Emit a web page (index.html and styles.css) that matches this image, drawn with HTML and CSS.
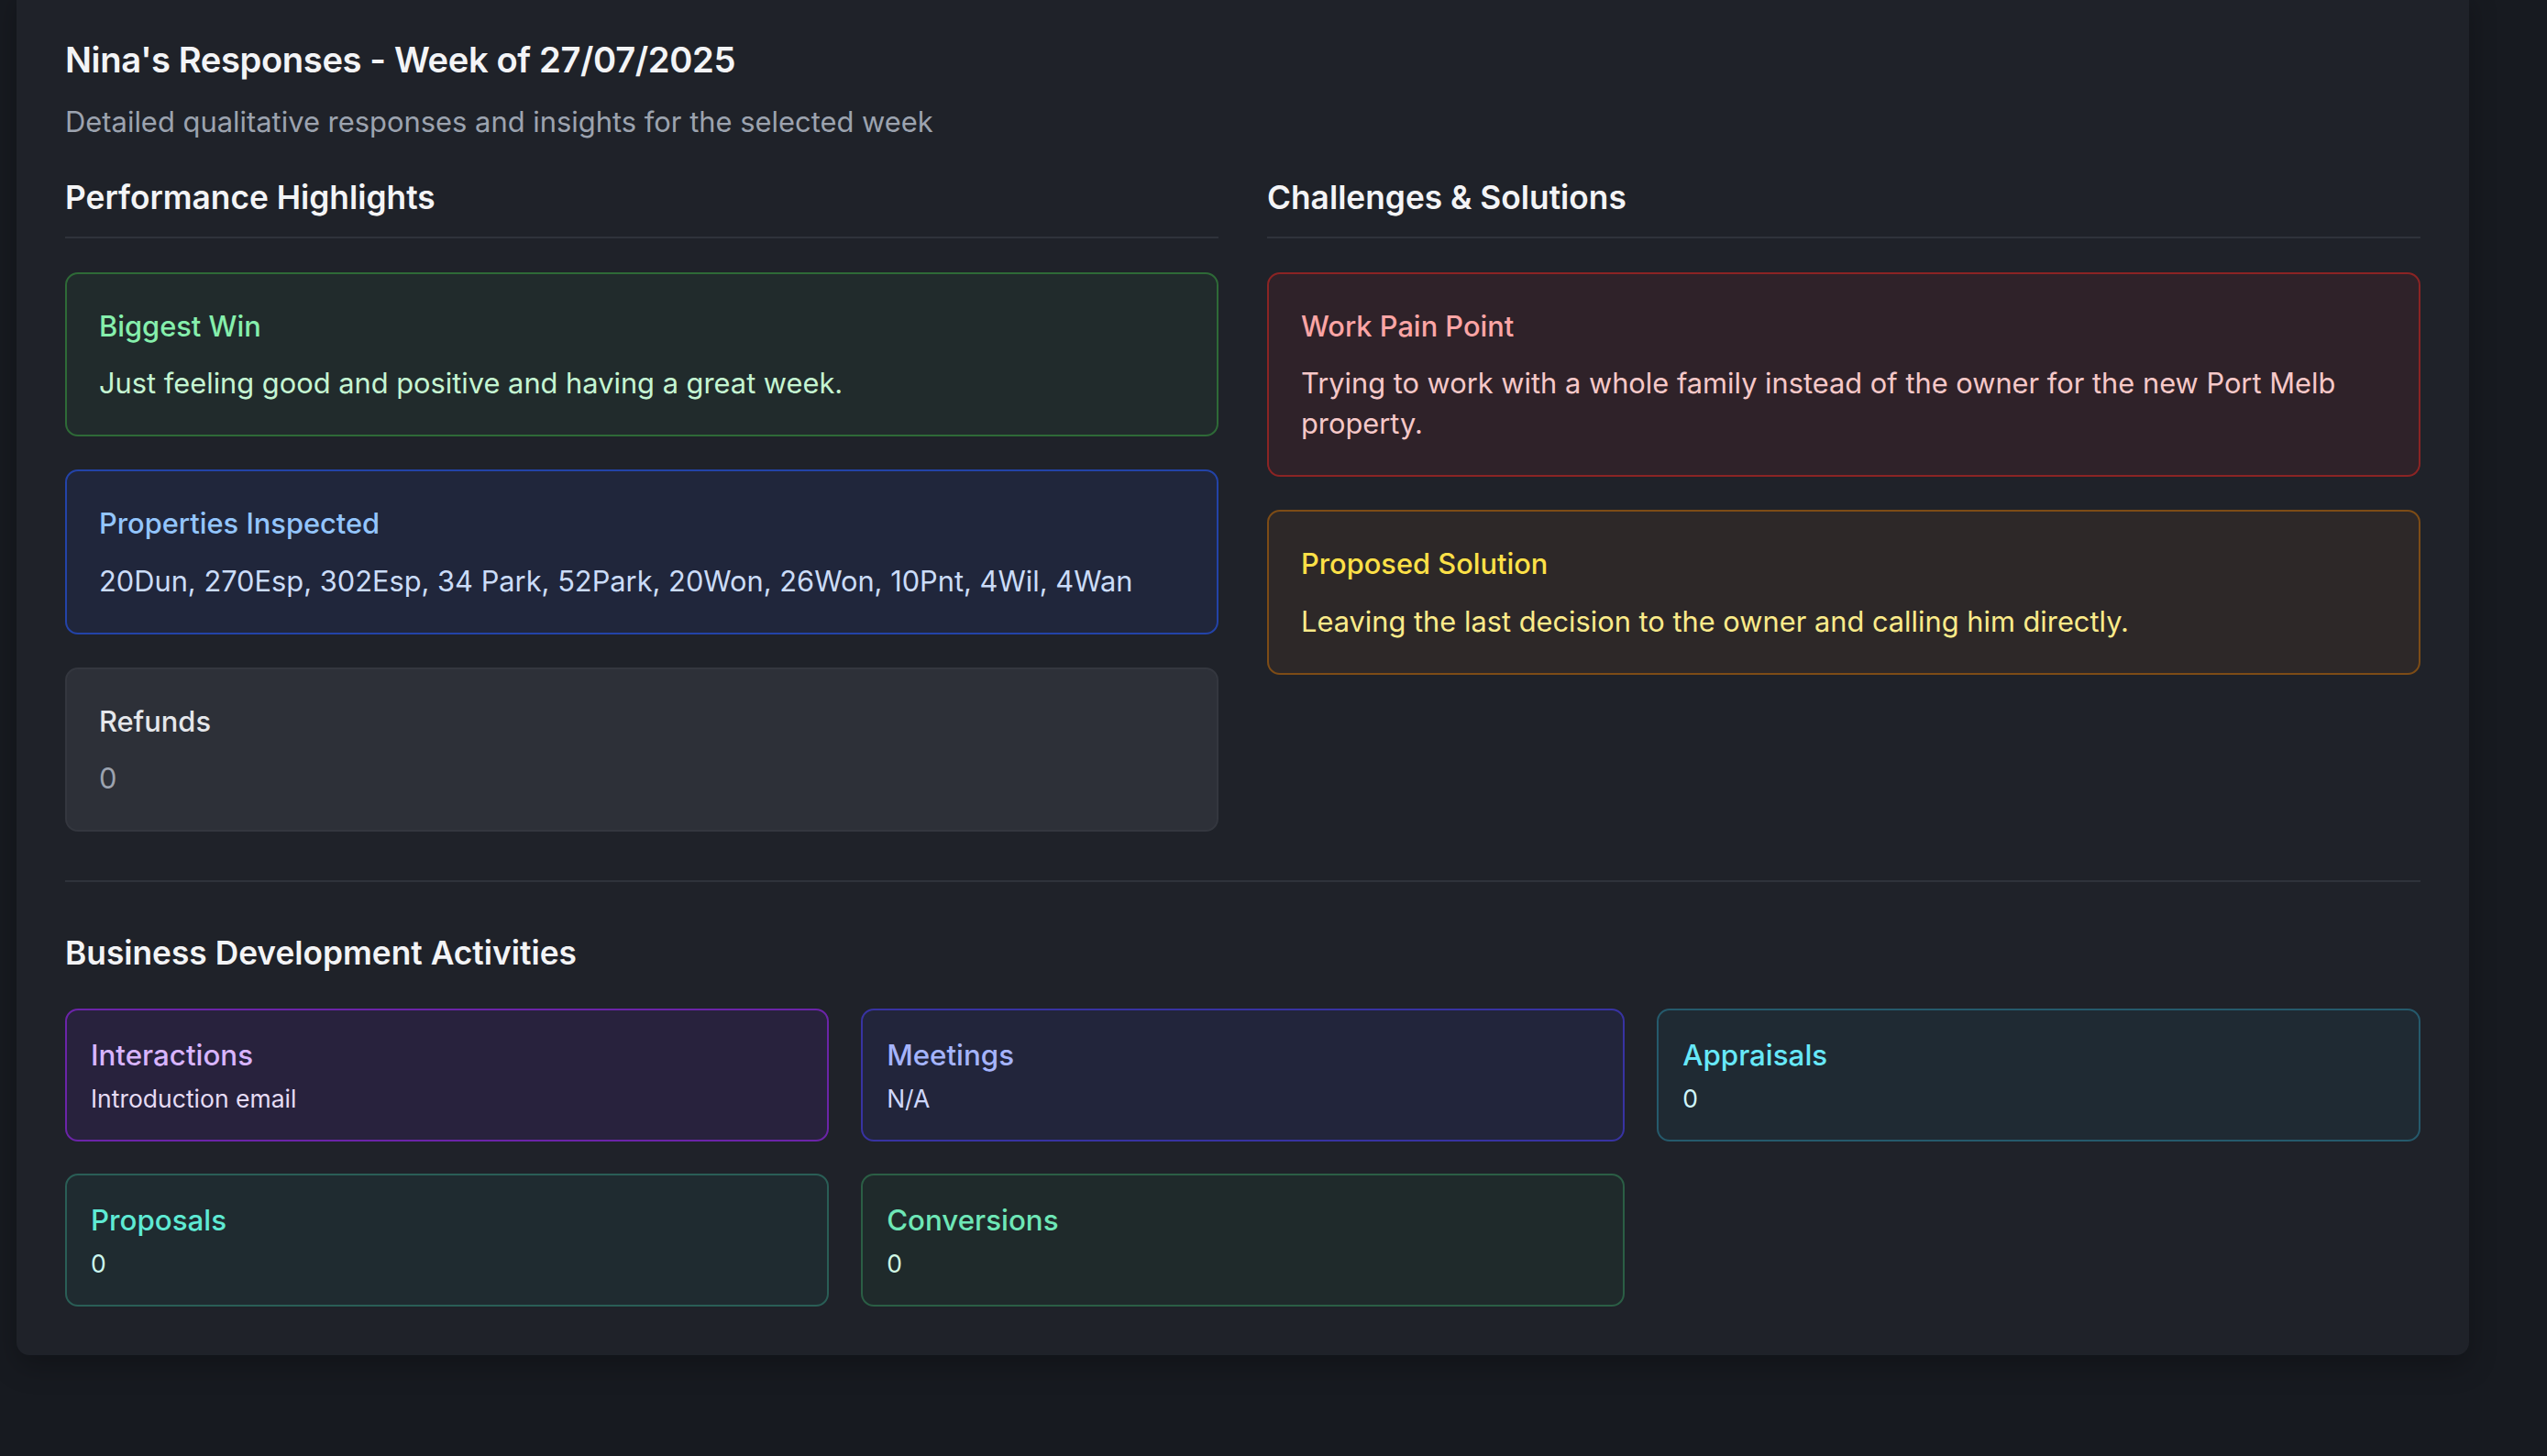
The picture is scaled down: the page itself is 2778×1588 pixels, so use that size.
FILE: index.html
```html
<!DOCTYPE html>
<html lang="en">
<head>
<meta charset="utf-8">
<title>Nina's Responses</title>
<link rel="stylesheet" href="styles.css">
</head>
<body>
<div class="page">
  <section class="panel">
    <header class="panel-head">
      <h1 class="title">Nina's Responses - Week of 27/07/2025</h1>
      <p class="subtitle">Detailed qualitative responses and insights for the selected week</p>
    </header>

    <div class="columns">
      <div class="column">
        <h2 class="section-title with-rule">Performance Highlights</h2>
        <div class="stack">
          <div class="card card-green">
            <div class="card-title">Biggest Win</div>
            <div class="card-body">Just feeling good and positive and having a great week.</div>
          </div>
          <div class="card card-blue">
            <div class="card-title">Properties Inspected</div>
            <div class="card-body">20Dun, 270Esp, 302Esp, 34 Park, 52Park, 20Won, 26Won, 10Pnt, 4Wil, 4Wan</div>
          </div>
          <div class="card card-gray">
            <div class="card-title">Refunds</div>
            <div class="card-body">0</div>
          </div>
        </div>
      </div>
      <div class="column">
        <h2 class="section-title with-rule">Challenges &amp; Solutions</h2>
        <div class="stack">
          <div class="card card-red">
            <div class="card-title">Work Pain Point</div>
            <div class="card-body">Trying to work with a whole family instead of the owner for the new Port Melb property.</div>
          </div>
          <div class="card card-yellow">
            <div class="card-title">Proposed Solution</div>
            <div class="card-body">Leaving the last decision to the owner and calling him directly.</div>
          </div>
        </div>
      </div>
    </div>

    <div class="bizdev">
      <h2 class="section-title">Business Development Activities</h2>
      <div class="grid">
        <div class="tile tile-purple">
          <div class="tile-title">Interactions</div>
          <div class="tile-value">Introduction email</div>
        </div>
        <div class="tile tile-indigo">
          <div class="tile-title">Meetings</div>
          <div class="tile-value">N/A</div>
        </div>
        <div class="tile tile-cyan">
          <div class="tile-title">Appraisals</div>
          <div class="tile-value">0</div>
        </div>
        <div class="tile tile-teal">
          <div class="tile-title">Proposals</div>
          <div class="tile-value">0</div>
        </div>
        <div class="tile tile-emerald">
          <div class="tile-title">Conversions</div>
          <div class="tile-value">0</div>
        </div>
      </div>
    </div>
  </section>
</div>
</body>
</html>
```
FILE: styles.css
```css
* { box-sizing: border-box; }

html, body {
  margin: 0;
  padding: 0;
  background: #171a20;
}

body {
  font-family: Inter, "Noto Sans", "Liberation Sans", sans-serif;
  color: #e5e7eb;
  min-height: 1588px;
}

.page {
  padding: 0 85px 0 18px;
}

.panel {
  margin-top: -14px;
  background: #1f2229;
  border-radius: 14px;
  padding: 53px 53px 53px 53px;
  box-shadow: 0 12px 30px rgba(0, 0, 0, 0.25);
}

.panel-head {
  margin-bottom: 36px;
}

.title {
  margin: 0;
  font-size: 38.2px;
  line-height: 52px;
  font-weight: 600;
  color: #f3f4f6;
  letter-spacing: -0.4px;
}

.subtitle {
  margin: 20px 0 0;
  font-size: 30.9px;
  line-height: 44px;
  color: #9ca3af;
}

.columns {
  display: grid;
  grid-template-columns: 1fr 1fr;
  column-gap: 53px;
  align-items: start;
}

.section-title {
  margin: 0;
  font-size: 35.3px;
  line-height: 49.6px;
  font-weight: 600;
  color: #f3f4f6;
}

.with-rule {
  padding-bottom: 17px;
  border-bottom: 2px solid #2f333b;
  margin-bottom: 37px;
}

.stack {
  display: flex;
  flex-direction: column;
  gap: 36px;
}

.card {
  border: 2px solid;
  border-radius: 14px;
  padding: 36px 35px 34px;
}

.card-title {
  font-size: 30.8px;
  line-height: 42.5px;
  font-weight: 500;
  margin-bottom: 19px;
}

.card-body {
  font-size: 30.8px;
  line-height: 44px;
}

.card-green { background: #212b2c; border-color: #2e6a37; }
.card-green .card-title { color: #86efac; }
.card-green .card-body { color: #c5f5d2; }

.card-blue { background: #20263b; border-color: #2343a8; }
.card-blue .card-title { color: #93c5fd; }
.card-blue .card-body { color: #cbdcf8; }

.card-gray { background: #2d3038; border-color: #34373f; }
.card-gray .card-title { color: #e5e7eb; }
.card-gray .card-body { color: #9ca3af; }

.card-red { background: #2f2229; border-color: #8b2424; }
.card-red .card-title { color: #fca5a5; }
.card-red .card-body { color: #f6c8c8; }

.card-yellow { background: #2d2828; border-color: #7d4c16; }
.card-yellow .card-title { color: #fde047; }
.card-yellow .card-body { color: #fbeb8a; }

.bizdev {
  margin-top: 53px;
  border-top: 2px solid #2f333b;
  padding-top: 53px;
}

.bizdev .section-title {
  margin-bottom: 35px;
}

.grid {
  display: grid;
  grid-template-columns: repeat(3, 1fr);
  gap: 35.4px;
}

.tile {
  border: 2px solid;
  border-radius: 14px;
  padding: 27px 26px 25px;
}

.tile-title {
  font-size: 31.3px;
  line-height: 44px;
  font-weight: 500;
}

.tile-value {
  margin-top: 5px;
  font-size: 26.5px;
  line-height: 40px;
}

.tile-purple { background: #28223d; border-color: #6b24a8; }
.tile-purple .tile-title { color: #d8b4fe; }
.tile-purple .tile-value { color: #e6dcf5; }

.tile-indigo { background: #22253b; border-color: #3833a2; }
.tile-indigo .tile-title { color: #a5b4fc; }
.tile-indigo .tile-value { color: #d0d8fb; }

.tile-cyan { background: #1f2a33; border-color: #255a6c; }
.tile-cyan .tile-title { color: #67e8f9; }
.tile-cyan .tile-value { color: #cff6fb; }

.tile-teal { background: #1f2b30; border-color: #2a5e56; }
.tile-teal .tile-title { color: #5eead4; }
.tile-teal .tile-value { color: #ccf7ee; }

.tile-emerald { background: #1f2a2b; border-color: #2b5e45; }
.tile-emerald .tile-title { color: #6ee7b7; }
.tile-emerald .tile-value { color: #d1f7e4; }
```
